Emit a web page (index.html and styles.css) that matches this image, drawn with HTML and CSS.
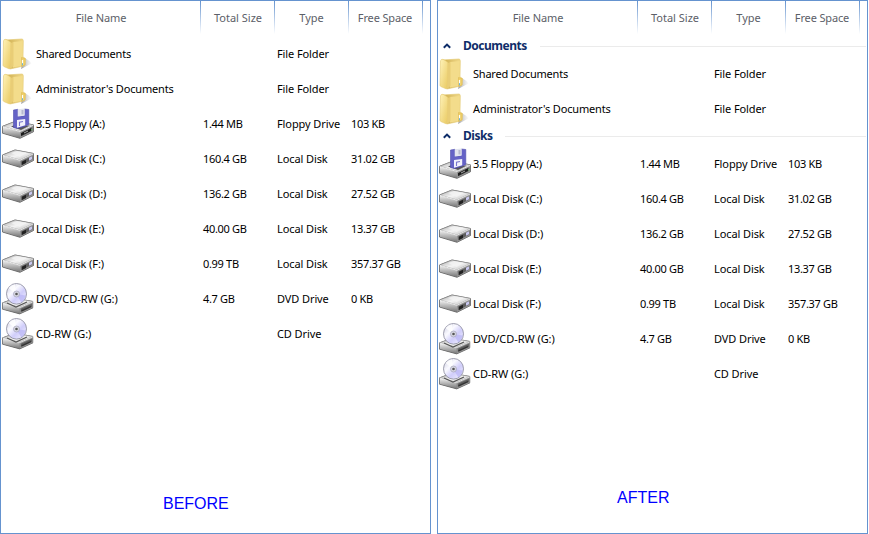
FILE: index.html
```html
<!DOCTYPE html>
<html lang="en">
<head>
<meta charset="utf-8">
<title>File list grouping</title>
<link rel="stylesheet" href="styles.css">
</head>
<body>
<svg class="defs" width="0" height="0" aria-hidden="true">
  <defs>
    <linearGradient id="gFront" x1="0" y1="0" x2="1" y2="1"><stop offset="0" stop-color="#fff3ba"/><stop offset="1" stop-color="#e9c95f"/></linearGradient>
    <linearGradient id="gBack" x1="0" y1="0" x2="1" y2="0"><stop offset="0" stop-color="#c9a846"/><stop offset=".45" stop-color="#dfc36c"/><stop offset="1" stop-color="#f5df91"/></linearGradient>
    <linearGradient id="gShade" x1="0" y1="0" x2="1" y2="0"><stop offset="0" stop-color="#888" stop-opacity=".85"/><stop offset="1" stop-color="#ccc" stop-opacity=".1"/></linearGradient>
    <linearGradient id="gTop" x1="0" y1="0" x2="1" y2="1"><stop offset="0" stop-color="#aaa"/><stop offset=".5" stop-color="#f4f4f4"/><stop offset="1" stop-color="#bbb"/></linearGradient>
    <linearGradient id="gSide" x1="0" y1="0" x2="0" y2="1"><stop offset="0" stop-color="#f0f0f0"/><stop offset="1" stop-color="#777"/></linearGradient>
    <linearGradient id="gDisc" x1="0" y1="0" x2="1" y2="1"><stop offset="0" stop-color="#c9c9df"/><stop offset=".35" stop-color="#fafaff"/><stop offset=".6" stop-color="#d0cdfa"/><stop offset="1" stop-color="#f5f5ff"/></linearGradient>
    <symbol id="folder" viewBox="0 0 32 32">
      <path d="M19 31 29.5 25.5Q27 21.5 22 20Z" fill="url(#gShade)"/>
      <path d="M3 2 20 1Q21.3 1 21.3 3L21 19 23.5 20.5 23 27 19.5 28.5 8 31Z" fill="url(#gBack)" stroke="#e2c86f" stroke-width=".6"/>
      <path d="M11 4 20.6 3V19L19 20V28L11 29.5Z" fill="#f3dc8b"/>
      <path d="M7 3 9 4.5V25L7.5 31 1.8 28.5Q1 28 1 27L1.5 3Q1.6 1 4 1.3Z" fill="url(#gFront)" stroke="#e4ca71" stroke-width=".6"/>
      <path d="M8.8 5 11.5 4V28L8 31Z" fill="#e9cd76"/>
      <path d="M19.5 19.5 23 20.5V27L19.5 28.3Z" fill="#efd16c" stroke="#dcb54a" stroke-width=".5"/>
      <path d="M20.5 22V27" stroke="#fff" stroke-width="1.2"/><path d="M20.5 25.2V27.3" stroke="#68b4d6" stroke-width="1"/>
    </symbol>
    <symbol id="drivebase" viewBox="0 0 32 20" preserveAspectRatio="none">
      <path d="M.5 6.5 13 1.5 31.5 5V12L18 18.8 .5 13.5Z" fill="#777" stroke="#555" stroke-width=".8"/>
      <path d="M.8 6.5 13 1.5 31.3 5 18 11.5Z" fill="url(#gTop)" stroke="#8b8b8b" stroke-width=".5"/>
      <path d="M.8 7 18 12V18.4L.8 13.3Z" fill="url(#gSide)"/>
      <path d="M18 12 31.3 5.5V12L18 18.4Z" fill="#929292"/>
      <path d="M19.2 13 30.3 7.5V11L19.2 16.7Z" fill="#5d5d5d"/>
      <path d="M.8 6.8 18 11.8 31.3 5.4" fill="none" stroke="#fff" stroke-width=".8"/>
    </symbol>
    <symbol id="disk" viewBox="0 0 32 32">
      <use href="#drivebase" x="0" y="5.5" width="32" height="20"/>
      <path d="M9 10 15 8 25 10 17.5 14Z" fill="#f3f3f3" opacity=".85"/>
      <path d="M20 18.7 24 16.7V20L20 22Z" fill="#222"/><path d="M27 14.8 30 13.3V16.3L27 17.8Z" fill="#c9c8ef"/>
    </symbol>
    <symbol id="floppy" viewBox="0 0 32 32">
      <use href="#drivebase" x="0" y="12" width="32" height="19.5"/>
      <path d="M9 18.5 12 17.2 28 17.5 19 22Z" fill="#555"/>
      <path d="M11.5 2 16 1.3V8.5L22.5 7.8V1L26.8 1.5V16.5L23.5 18 15.5 20.5 11.5 19.5Z" fill="#6462c6" stroke="#514fad" stroke-width=".6"/>
      <path d="M15.7 1.2 22.7.5V7.6L15.7 8.5Z" fill="#e2e4ef"/><path d="M19.5 2H21.5V6.4H19.5Z" fill="#b7b9cf"/>
      <path d="M15 12 23.2 11V17.3L15 19.8Z" fill="#f2f2fb"/><path d="M17.5 18V14.3L21 13.5" fill="none" stroke="#7775cd" stroke-width="1.1"/>
      <path d="M19 25.2 29 20.3V23L19 28Z" fill="#1b1b1b"/><path d="M22 25 26 23" stroke="#ccc" stroke-width=".8"/><path d="M29 21.8h1.5" stroke="#6bc566"/>
    </symbol>
    <symbol id="disc" viewBox="0 0 32 32">
      <use href="#drivebase" x="0" y="14" width="31.5" height="18"/>
      <path d="M5 20 14 24 25 19" fill="none" stroke="#555" stroke-width="1.2"/>
      <ellipse cx="14.5" cy="10.8" rx="10" ry="10.3" fill="url(#gDisc)" stroke="#9292a4" stroke-width=".9"/>
      <path d="M14 11 6.5 5Q9 2 13 1.3Z" fill="#fff" opacity=".8"/><path d="M14 11 23.8 12.5Q23 17 19.5 19.5Z" fill="#b9b5f5" opacity=".75"/>
      <circle cx="14.5" cy="11" r="3" fill="#d9d9e5" stroke="#a4a4b8" stroke-width=".7"/><circle cx="14.5" cy="11" r="1.3" fill="#555"/>
      <path d="M19.5 27.9 29 23.5" stroke="#333" stroke-width="1.3"/>
    </symbol>
    <symbol id="caret" viewBox="0 0 8 6"><path d="M.8 4.8 4 1.6 7.2 4.8" fill="none" stroke="#0f2d69" stroke-width="2"/></symbol>
  </defs>
</svg>
<main class="comparison">
  <section class="panel">
    <div class="head"><span>File Name</span><span>Total Size</span><span>Type</span><span>Free Space</span></div>
    <div class="row"><svg><use href="#folder"/></svg><span>Shared Documents</span><span></span><span>File Folder</span><span></span></div>
    <div class="row"><svg><use href="#folder"/></svg><span class="wide">Administrator's Documents</span><span></span><span>File Folder</span><span></span></div>
    <div class="row"><svg><use href="#floppy"/></svg><span class="drive">3.5 Floppy (A:)</span><span>1.44 MB</span><span>Floppy Drive</span><span>103 KB</span></div>
    <div class="row"><svg><use href="#disk"/></svg><span class="drive local">Local Disk (C:)</span><span>160.4 GB</span><span>Local Disk</span><span>31.02 GB</span></div>
    <div class="row"><svg><use href="#disk"/></svg><span class="drive local">Local Disk (D:)</span><span>136.2 GB</span><span>Local Disk</span><span>27.52 GB</span></div>
    <div class="row"><svg><use href="#disk"/></svg><span class="drive local">Local Disk (E:)</span><span>40.00 GB</span><span>Local Disk</span><span>13.37 GB</span></div>
    <div class="row"><svg><use href="#disk"/></svg><span class="drive local">Local Disk (F:)</span><span>0.99 TB</span><span>Local Disk</span><span>357.37 GB</span></div>
    <div class="row"><svg><use href="#disc"/></svg><span class="drive optical">DVD/CD-RW (G:)</span><span>4.7 GB</span><span>DVD Drive</span><span>0 KB</span></div>
    <div class="row"><svg><use href="#disc"/></svg><span class="drive optical">CD-RW (G:)</span><span></span><span>CD Drive</span><span></span></div>
    <p class="caption before">BEFORE</p>
  </section>
  <section class="panel">
    <div class="head"><span>File Name</span><span>Total Size</span><span>Type</span><span>Free Space</span></div>
    <div class="group"><svg><use href="#caret"/></svg><h2>Documents</h2></div>
    <div class="row"><svg><use href="#folder"/></svg><span>Shared Documents</span><span></span><span>File Folder</span><span></span></div>
    <div class="row"><svg><use href="#folder"/></svg><span class="wide">Administrator's Documents</span><span></span><span>File Folder</span><span></span></div>
    <div class="group"><svg><use href="#caret"/></svg><h2>Disks</h2></div>
    <div class="row"><svg><use href="#floppy"/></svg><span class="drive">3.5 Floppy (A:)</span><span>1.44 MB</span><span>Floppy Drive</span><span>103 KB</span></div>
    <div class="row"><svg><use href="#disk"/></svg><span class="drive local">Local Disk (C:)</span><span>160.4 GB</span><span>Local Disk</span><span>31.02 GB</span></div>
    <div class="row"><svg><use href="#disk"/></svg><span class="drive local">Local Disk (D:)</span><span>136.2 GB</span><span>Local Disk</span><span>27.52 GB</span></div>
    <div class="row"><svg><use href="#disk"/></svg><span class="drive local">Local Disk (E:)</span><span>40.00 GB</span><span>Local Disk</span><span>13.37 GB</span></div>
    <div class="row"><svg><use href="#disk"/></svg><span class="drive local">Local Disk (F:)</span><span>0.99 TB</span><span>Local Disk</span><span>357.37 GB</span></div>
    <div class="row"><svg><use href="#disc"/></svg><span class="drive optical">DVD/CD-RW (G:)</span><span>4.7 GB</span><span>DVD Drive</span><span>0 KB</span></div>
    <div class="row"><svg><use href="#disc"/></svg><span class="drive optical">CD-RW (G:)</span><span></span><span>CD Drive</span><span></span></div>
    <p class="caption after">AFTER</p>
  </section>
</main>
</body>
</html>
```
FILE: styles.css
```css
* { box-sizing: border-box; }
body { margin: 0; background: #fff; color: #000; font: 11px/16px "Noto Sans", "Open Sans", sans-serif; }
.defs { display: block; }
.comparison { display: flex; gap: 6px; height: 534px; }
.panel { width: 431px; flex: none; display: flex; flex-direction: column; border: 1px solid #6593cf; }
.head { display: grid; grid-template-columns: 200px 74px 74px 74px; height: 35px; flex: none; color: #5c6068; }
.head span {
  height: 33px; padding-top: 9px; text-align: center; white-space: nowrap;
  background: linear-gradient(#6593cf, #fff) right / 1px 100% no-repeat;
}
.head span:first-child { letter-spacing: -0.1px; }
.head span:nth-child(3) { padding-right: 1px; }
.head span:last-child { letter-spacing: -0.15px; padding-right: 2px; }
.row { display: grid; grid-template-columns: 34px 167px 74px 74px 1fr; height: 35px; flex: none; align-items: center; padding-left: 1px; }
.row svg { width: 32px; height: 32px; }
.row span { white-space: nowrap; padding-top: 1px; letter-spacing: -0.22px; }
.row .wide { letter-spacing: -0.15px; }
.row .drive { letter-spacing: -0.2px; }
.row .local { letter-spacing: -0.12px; }
.row .optical { letter-spacing: -0.07px; }
.row span:nth-child(3), .row span:nth-child(5) { letter-spacing: -0.32px; }
.row span:nth-child(4) { letter-spacing: -0.1px; }
.group { display: flex; align-items: center; height: 20px; flex: none; padding: 0 1px 0 5px; }
.group svg { width: 8px; height: 6px; margin-right: 12px; }
.group h2 { margin: 0; font-size: 12px; line-height: 18px; font-weight: 700; letter-spacing: -0.48px; color: #0f2d69; }
.group::after { content: ""; flex: 1; height: 1px; margin-left: 13px; background: #ebebeb; }
.caption { margin: auto 0 0; font: 16px/20px "Liberation Sans", Arial, sans-serif; color: #00f; }
.before { padding: 0 0 19px 162px; }
.after { padding: 0 0 25px 179px; }
```
